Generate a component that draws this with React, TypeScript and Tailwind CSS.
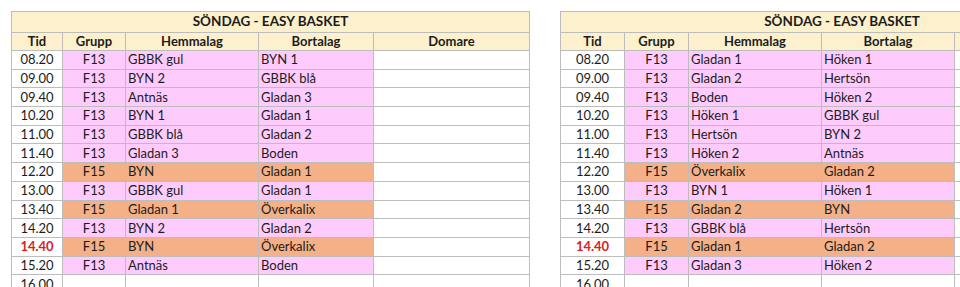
type Row = { tid: string; grupp: string; hemma: string; borta: string; late?: boolean };

const left: Row[] = [
  { tid: "08.20", grupp: "F13", hemma: "GBBK gul", borta: "BYN 1" },
  { tid: "09.00", grupp: "F13", hemma: "BYN 2", borta: "GBBK blå" },
  { tid: "09.40", grupp: "F13", hemma: "Antnäs", borta: "Gladan 3" },
  { tid: "10.20", grupp: "F13", hemma: "BYN 1", borta: "Gladan 1" },
  { tid: "11.00", grupp: "F13", hemma: "GBBK blå", borta: "Gladan 2" },
  { tid: "11.40", grupp: "F13", hemma: "Gladan 3", borta: "Boden" },
  { tid: "12.20", grupp: "F15", hemma: "BYN", borta: "Gladan 1" },
  { tid: "13.00", grupp: "F13", hemma: "GBBK gul", borta: "Gladan 1" },
  { tid: "13.40", grupp: "F15", hemma: "Gladan 1", borta: "Överkalix" },
  { tid: "14.20", grupp: "F13", hemma: "BYN 2", borta: "Gladan 2" },
  { tid: "14.40", grupp: "F15", hemma: "BYN", borta: "Överkalix", late: true },
  { tid: "15.20", grupp: "F13", hemma: "Antnäs", borta: "Boden" },
  { tid: "16.00", grupp: "", hemma: "", borta: "" },
];

const right: Row[] = [
  { tid: "08.20", grupp: "F13", hemma: "Gladan 1", borta: "Höken 1" },
  { tid: "09.00", grupp: "F13", hemma: "Gladan 2", borta: "Hertsön" },
  { tid: "09.40", grupp: "F13", hemma: "Boden", borta: "Höken 2" },
  { tid: "10.20", grupp: "F13", hemma: "Höken 1", borta: "GBBK gul" },
  { tid: "11.00", grupp: "F13", hemma: "Hertsön", borta: "BYN 2" },
  { tid: "11.40", grupp: "F13", hemma: "Höken 2", borta: "Antnäs" },
  { tid: "12.20", grupp: "F15", hemma: "Överkalix", borta: "Gladan 2" },
  { tid: "13.00", grupp: "F13", hemma: "BYN 1", borta: "Höken 1" },
  { tid: "13.40", grupp: "F15", hemma: "Gladan 2", borta: "BYN" },
  { tid: "14.20", grupp: "F13", hemma: "GBBK blå", borta: "Hertsön" },
  { tid: "14.40", grupp: "F15", hemma: "Gladan 1", borta: "Gladan 2", late: true },
  { tid: "15.20", grupp: "F13", hemma: "Gladan 3", borta: "Höken 2" },
  { tid: "16.00", grupp: "", hemma: "", borta: "" },
];

function Schedule({ rows, cols }: { rows: Row[]; cols: string }) {
  return (
    <div className={`grid ${cols} gap-px bg-[#bdbdbd] border border-[#bdbdbd] shrink-0`}>
      <div className="col-span-5 h-[20px] bg-[#fdf0cc] flex items-center justify-center font-bold text-[13.5px]">
        SÖNDAG - EASY BASKET
      </div>
      {["Tid", "Grupp", "Hemmalag", "Bortalag", "Domare"].map((h) => (
        <div key={h} className="h-[17px] bg-[#fdf0cc] flex items-center justify-center font-bold">
          {h}
        </div>
      ))}
      {rows.map((r) => {
        const fill = r.tid === "16.00" ? "bg-white" : r.grupp === "F15" ? "bg-[#f4b086]" : "bg-[#fecbfd]";
        return [
          <div
            key={r.tid + "t"}
            className={`h-[17.7px] bg-white flex items-center justify-center ${r.late ? "text-[#d81e1e] font-bold" : ""}`}
          >
            {r.tid}
          </div>,
          <div key={r.tid + "g"} className={`h-[17.7px] ${fill} flex items-center justify-center`}>
            {r.grupp}
          </div>,
          <div key={r.tid + "h"} className={`h-[17.7px] ${fill} flex items-center pl-[2px]`}>
            {r.hemma}
          </div>,
          <div key={r.tid + "b"} className={`h-[17.7px] ${fill} flex items-center pl-[2px]`}>
            {r.borta}
          </div>,
          <div key={r.tid + "d"} className="h-[17.7px] bg-white" />,
        ];
      })}
    </div>
  );
}

export default function App() {
  return (
    <div
      className="w-[960px] h-[287px] overflow-hidden bg-white text-[#1c1c1c] text-[13px] leading-none flex gap-[30px] pl-[11px] pt-[11px]"
      style={{ fontFamily: "Lato, 'Liberation Sans', sans-serif" }}
    >
      <Schedule rows={left} cols="grid-cols-[50px_62px_132px_114px_155px]" />
      <Schedule rows={right} cols="grid-cols-[63px_63px_132px_132px_168px]" />
    </div>
  );
}
